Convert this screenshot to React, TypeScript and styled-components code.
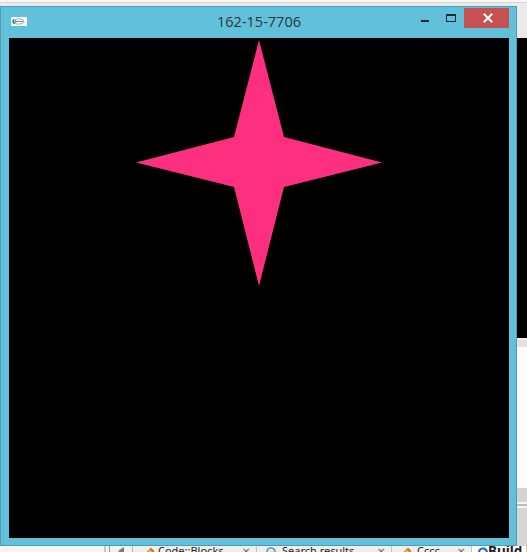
import React from "react";
import styled, { createGlobalStyle } from "styled-components";

const Global = createGlobalStyle`
  html, body { margin: 0; padding: 0; background: #ececec; }
  body { width: 527px; height: 552px; overflow: hidden; }
  #root { width: 527px; height: 552px; }
`;

const Screen = styled.div`
  width: 527px;
  height: 552px;
  overflow: hidden;
  display: flex;
  flex-direction: column;
  background: #ececec;
  font-family: "Open Sans", "Noto Sans", sans-serif;
`;

const TopStrip = styled.div`
  flex: none;
  height: 6px;
  background: linear-gradient(#f7f7f7 0 2px, #d9d9d9 2px 3px, #ebebeb 3px);
`;

const MainRow = styled.div`
  flex: none;
  height: 540px;
  display: flex;
`;

const Window = styled.div`
  flex: none;
  width: 517px;
  height: 540px;
  box-sizing: border-box;
  border: 1px solid #4f9cb2;
  background: #62c1da;
  padding: 0 7px 7px 8px;
  display: flex;
  flex-direction: column;
`;

const TitleBar = styled.div`
  flex: none;
  height: 31px;
  display: grid;
  grid-template-columns: 1fr auto 1fr;
  align-items: start;
`;

const TitleLeft = styled.div`
  display: flex;
  padding: 10px 0 0 2px;
`;

const Title = styled.div`
  padding-top: 5px;
  font-size: 14.5px;
  line-height: 20px;
  color: #2e3336;
  white-space: nowrap;
`;

const TitleRight = styled.div`
  display: flex;
  justify-content: flex-end;
  padding-top: 1px;
`;

const WinButton = styled.div<{ $w: number; $bg?: string }>`
  width: ${(p) => p.$w}px;
  height: 20px;
  background: ${(p) => p.$bg ?? "transparent"};
  display: flex;
  svg { display: block; }
`;

const Canvas = styled.div`
  flex: none;
  width: 500px;
  height: 500px;
  background: #000;
  svg { display: block; }
`;

const RightStrip = styled.div`
  flex: 1;
  display: flex;
  flex-direction: column;
`;

const Band = styled.div<{ $h: number; $bg: string }>`
  flex: none;
  height: ${(p) => p.$h}px;
  background: ${(p) => p.$bg};
`;

const TabBar = styled.div`
  flex: none;
  height: 20px;
  display: flex;
  align-items: stretch;
  background: #f2f2f2;
  font-family: "Noto Sans", "Open Sans", sans-serif;
  font-size: 11px;
  line-height: 8px;
  color: #1e1e1e;
`;

const TabSpacer = styled.div`
  flex: none;
  width: 104px;
  background: #f4f4f4;
`;

const TabNav = styled.div`
  flex: none;
  width: 29px;
  box-sizing: border-box;
  border-left: 2px solid #c9c9c9;
  border-right: 1px solid #b4b4b4;
  display: flex;
  align-items: flex-start;
  padding: 1px 0 0 12px;
  background: linear-gradient(90deg, transparent 0 3px, #9a9a9a 3px 4px, transparent 4px);
  svg { display: block; }
`;

const Tab = styled.div<{ $w: number; $pad: number; $bold?: boolean; $bg?: string }>`
  flex: none;
  width: ${(p) => p.$w}px;
  box-sizing: border-box;
  padding-left: ${(p) => p.$pad}px;
  display: flex;
  align-items: flex-start;
  border-right: 1px solid #c4c4c4;
  background: ${(p) => p.$bg ?? "#eeeeee"};
  font-weight: ${(p) => (p.$bold ? 700 : 400)};
  font-size: ${(p) => (p.$bold ? "13.5px" : "11px")};
  white-space: nowrap;
  overflow: hidden;
  svg { display: block; flex: none; }
`;

const TabIcon = styled.div<{ $gap: number }>`
  flex: none;
  width: 12px;
  margin-right: ${(p) => p.$gap}px;
  padding-top: 1px;
`;

const TabLabel = styled.span`
  flex: 1;
  padding-top: 0.5px;
`;

const TabClose = styled.span`
  flex: none;
  width: 14px;
  color: #6a6a6a;
  font-size: 10px;
  padding-top: 1px;
`;

const AppIcon = () => (
  <svg width="16" height="9" viewBox="0 0 16 9">
    <rect width="16" height="9" fill="#ffffff" />
    <ellipse cx="7.5" cy="4.5" rx="5.5" ry="2.6" fill="none" stroke="#8aa8b4" strokeWidth="1" />
    <path d="M3.2 2.6 C1.6 3.6 1.8 5.6 3.6 6.4" fill="none" stroke="#1f7f8c" strokeWidth="1.6" />
    <path d="M5 4.5 H12.5" stroke="#5f8e9a" strokeWidth="0.9" />
    <circle cx="4.6" cy="4.5" r="1" fill="#1f7f8c" />
  </svg>
);

const MinGlyph = () => (
  <svg width="26" height="20" viewBox="0 0 26 20">
    <rect x="9" y="12" width="8" height="2" fill="#1f2a30" />
  </svg>
);

const MaxGlyph = () => (
  <svg width="26" height="20" viewBox="0 0 26 20">
    <rect x="8.5" y="6.5" width="9" height="7" fill="none" stroke="#1f2a30" strokeWidth="1" />
    <rect x="8" y="6" width="10" height="2" fill="#1f2a30" />
  </svg>
);

const CloseGlyph = () => (
  <svg width="45" height="20" viewBox="0 0 45 20">
    <path d="M20.5 6.5 L27.5 13.5 M27.5 6.5 L20.5 13.5" stroke="#ffffff" strokeWidth="2" strokeLinecap="square" />
  </svg>
);

const Star = () => (
  <svg width="500" height="500" viewBox="0 0 500 500">
    <polygon
      points="250,2 275,99 373,124.5 275,149 250,248 225,149 127,124.5 225,99"
      fill="#ff2f80"
    />
  </svg>
);

const Pencil = () => (
  <svg width="12" height="12" viewBox="0 0 12 12">
    <path d="M8 1 L11 4 L4 11 L1 11 L1 8 Z" fill="#f1b84a" stroke="#b8741c" strokeWidth="0.8" />
    <path d="M8 1 L11 4 L9.6 5.4 L6.6 2.4 Z" fill="#e06a5a" />
    <path d="M1 8 L4 11 L1 11 Z" fill="#5a4a3a" />
  </svg>
);

const SearchIcon = () => (
  <svg width="12" height="12" viewBox="0 0 12 12">
    <circle cx="6" cy="5" r="4.2" fill="#cfe6f7" stroke="#4a86c5" strokeWidth="1.2" />
    <path d="M3.8 3.5 Q5 2.4 6.6 2.6" stroke="#ffffff" strokeWidth="1" fill="none" />
  </svg>
);

const BuildIcon = () => (
  <svg width="12" height="12" viewBox="0 0 12 12">
    <path d="M2 6 A4 4 0 0 1 10 5" fill="none" stroke="#2a6fc9" strokeWidth="2.2" />
    <path d="M10 6 A4 4 0 0 1 2 7" fill="none" stroke="#4b94e0" strokeWidth="2.2" />
  </svg>
);

const NavArrow = () => (
  <svg width="7" height="8" viewBox="0 0 7 8">
    <path d="M6 0 L0 4 L6 8 Z" fill="#7a7a7a" />
  </svg>
);

const rightBands: { h: number; bg: string }[] = [
  { h: 32, bg: "#eaeaea" },
  { h: 300, bg: "#000000" },
  { h: 2, bg: "#f0f0f0" },
  { h: 7, bg: "#e2e2e2" },
  { h: 141, bg: "#fbfbfb" },
  { h: 14, bg: "#d3d3d3" },
  { h: 2, bg: "#f4f4f4" },
  { h: 2, bg: "#bdbdbd" },
  { h: 2, bg: "#f4f4f4" },
  { h: 38, bg: "#d6d6d6" },
];

export default function App() {
  return (
    <>
      <Global />
      <Screen>
        <TopStrip />
        <MainRow>
          <Window>
            <TitleBar>
              <TitleLeft>
                <AppIcon />
              </TitleLeft>
              <Title>162-15-7706</Title>
              <TitleRight>
                <WinButton $w={26}>
                  <MinGlyph />
                </WinButton>
                <WinButton $w={26}>
                  <MaxGlyph />
                </WinButton>
                <WinButton $w={45} $bg="#c75050">
                  <CloseGlyph />
                </WinButton>
              </TitleRight>
            </TitleBar>
            <Canvas>
              <Star />
            </Canvas>
          </Window>
          <RightStrip>
            {rightBands.map((b, i) => (
              <Band key={i} $h={b.h} $bg={b.bg} />
            ))}
          </RightStrip>
        </MainRow>
        <TabBar>
          <TabSpacer />
          <TabNav>
            <NavArrow />
          </TabNav>
          <Tab $w={124} $pad={10}>
            <TabIcon $gap={3}>
              <Pencil />
            </TabIcon>
            <TabLabel>Code::Blocks</TabLabel>
            <TabClose>✕</TabClose>
          </Tab>
          <Tab $w={135} $pad={8}>
            <TabIcon $gap={5}>
              <SearchIcon />
            </TabIcon>
            <TabLabel>Search results</TabLabel>
            <TabClose>✕</TabClose>
          </Tab>
          <Tab $w={80} $pad={8}>
            <TabIcon $gap={5}>
              <Pencil />
            </TabIcon>
            <TabLabel>Cccc</TabLabel>
            <TabClose>✕</TabClose>
          </Tab>
          <Tab $w={60} $pad={5} $bold $bg="#ffffff">
            <TabIcon $gap={-1}>
              <BuildIcon />
            </TabIcon>
            <TabLabel>Build log</TabLabel>
          </Tab>
        </TabBar>
      </Screen>
    </>
  );
}
